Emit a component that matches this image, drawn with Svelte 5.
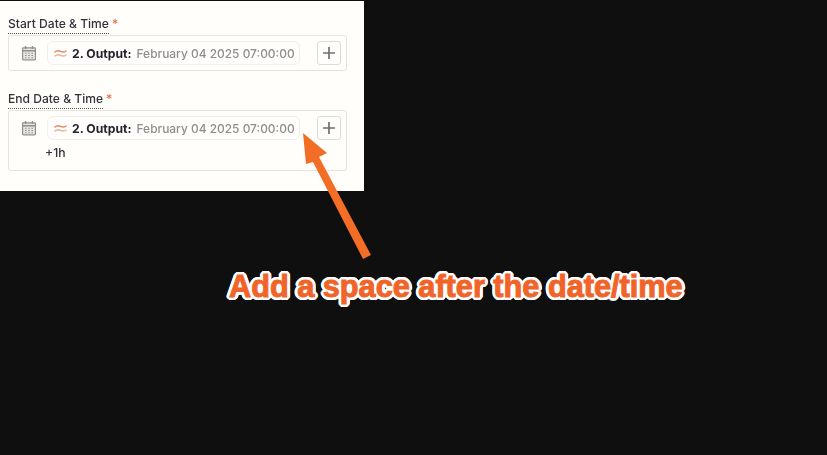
<script>
  const fields = [
    { label: 'Start Date & Time', extra: '' },
    { label: 'End Date & Time', extra: '+1h' }
  ];
</script>

<div class="screen">
  <section class="panel">
    {#each fields as f}
      <div class="field">
        <div class="label"><span class="name">{f.label}</span><span class="req">*</span></div>
        <div class="box">
          <div class="row">
            <svg class="cal" width="16" height="16" viewBox="0 0 16 16" fill="none" stroke="#8f8f8c" stroke-width="1.2">
              <rect x="1.600" y="2.800" width="12.800" height="12" rx="0.8" fill="#e8e7e4"/>
              <path d="M1.600 5.800h12.800M4.600 1v3M11.400 1v3" stroke-width="1.4"/>
              <path d="M4 8.300h1.600M7.200 8.300h1.600M10.400 8.300H12M4 10.500h1.600M7.200 10.500h1.600M10.400 10.500H12M4 12.700h1.600M7.200 12.700h1.600M10.400 12.700H12" stroke-width="1.1"/>
            </svg>
            <div class="pill">
              <svg class="wave" width="13" height="11" viewBox="0 0 13 11" fill="none" stroke-width="1.500" stroke-linecap="round">
                <path d="M1 4c2-2 4-1.400 5.500-.6s3.500 1 5.500-.4" stroke="#e8865e"/>
                <path d="M1 8c2-2 4-1.400 5.500-.6s3.500 1 5.500-.4" stroke="#e9b39c"/>
              </svg>
              <b>2. Output:</b>
              <span class="val">February 04 2025 07:00:00</span>
            </div>
            <button class="add" aria-label="Add">
              <svg width="14" height="14" viewBox="0 0 14 14" stroke="#6f6f6c" stroke-width="1.700"><path d="M7 1v12M1 7h12"/></svg>
            </button>
          </div>
          {#if f.extra}<div class="extra">{f.extra}</div>{/if}
        </div>
      </div>
    {/each}
  </section>

  <svg class="arrow" width="827" height="455" viewBox="0 0 827 455">
    <polygon fill="#f26d25" points="303,133 327,153 319,157 371,255 363,259 313,162 306,164"/>
  </svg>
  <div class="note">Add a space after the date/time</div>
</div>

<style>
  :global(body) { margin: 0; background: #0f0f0f; }
  .screen {
    position: relative;
    width: 827px;
    height: 455px;
    overflow: hidden;
    background: #0f0f0f;
    padding-top: 1px;
    box-sizing: border-box;
  }
  .panel {
    width: 364px;
    height: 190px;
    box-sizing: border-box;
    background: #fffefb;
    padding: 14px 17px 0 8px;
    display: flex;
    flex-direction: column;
    gap: 19px;
    font-family: Inter, "Liberation Sans", sans-serif;
    filter: blur(0.4px);
  }
  .label {
    height: 20px;
    display: flex;
    font-size: 12.100px;
    line-height: 18px;
    color: #33313b;
    font-weight: 500;
  }
  .name { border-bottom: 1px dotted #55525c; height: 18px; }
  .req { color: #e9724a; margin-left: 3px; }
  .box {
    border: 1px solid #e4e3de;
    border-radius: 3px;
    padding: 5px 5px 5px 12px;
  }
  .row { display: flex; align-items: center; height: 24px; }
  .cal { flex: none; margin-right: 10px; }
  .pill {
    width: 253px;
    height: 24px;
    box-sizing: border-box;
    border: 1px solid #f0efea;
    border-radius: 6px;
    background: #fffefc;
    display: flex;
    align-items: center;
    padding-left: 6px;
    font-size: 12.200px;
    white-space: nowrap;
  }
  .wave { margin-right: 5px; flex: none; }
  .pill b { font-weight: 700; color: #26242d; margin-right: 5px; }
  .val { color: #8f8e8b; font-weight: 500; font-size: 11.950px; }
  .add {
    margin-left: 17px;
    width: 24px;
    height: 24px;
    padding: 0;
    background: #fffefc;
    border: 1px solid #dcdbd6;
    border-radius: 3px;
    display: flex;
    align-items: center;
    justify-content: center;
  }
  .extra {
    margin: 5px 0 5px 24px;
    height: 15px;
    font-size: 12.200px;
    line-height: 15px;
    color: #33313b;
    font-weight: 500;
  }
  .arrow { position: absolute; left: 0; top: 0; }
  .note {
    position: absolute;
    left: 229px;
    top: 269px;
    font-family: "Liberation Sans", Arial, sans-serif;
    font-weight: 700;
    font-size: 30.700px;
    line-height: 36px;
    white-space: nowrap;
    color: #f0642a;
    -webkit-text-stroke: 1px #f0642a;
    text-shadow:
      3.400px 0 0 #fff, -3.400px 0 0 #fff, 0 3.400px 0 #fff, 0 -3.400px 0 #fff,
      3.140px 1.300px 0 #fff, -3.140px 1.300px 0 #fff, 3.140px -1.300px 0 #fff, -3.140px -1.300px 0 #fff,
      1.300px 3.140px 0 #fff, -1.300px 3.140px 0 #fff, 1.300px -3.140px 0 #fff, -1.300px -3.140px 0 #fff,
      2.400px 2.400px 0 #fff, -2.400px 2.400px 0 #fff, 2.400px -2.400px 0 #fff, -2.400px -2.400px 0 #fff;
  }
</style>
